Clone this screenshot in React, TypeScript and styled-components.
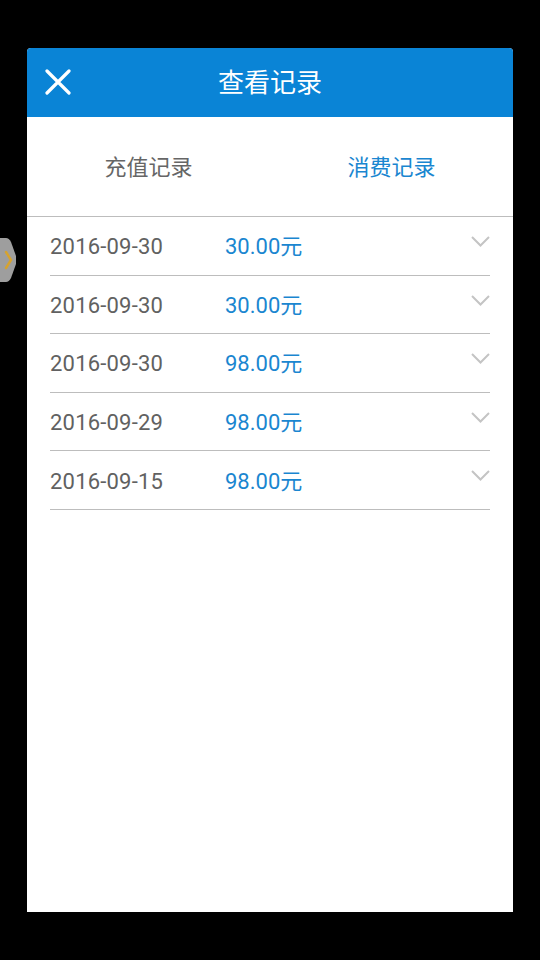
import styled, { createGlobalStyle } from "styled-components";

const GlobalStyle = createGlobalStyle`
    html, body {
        margin: 0;
        padding: 0;
        background: #000;
    }
    body {
        font-family: Roboto, "Noto Sans CJK SC", sans-serif;
    }
`

const records = [
    { date: "2016-09-30", amount: "30.00元" },
    { date: "2016-09-30", amount: "30.00元" },
    { date: "2016-09-30", amount: "98.00元" },
    { date: "2016-09-29", amount: "98.00元" },
    { date: "2016-09-15", amount: "98.00元" },
];

export default function App() {
    return (
        <>
            <GlobalStyle />
            <Screen>
                <SideHandle>
                    <svg width="16" height="44" viewBox="0 0 16 44">
                        <path d="M0 0 H6 Q9 0 11 4 L16 18 Q17 22 16 26 L11 40 Q9 44 6 44 H0 Z" fill="#9e9e9e" />
                        <path d="M6 14 L11 22 L6 30" stroke="#d7a32c" strokeWidth="2.4" fill="none" strokeLinecap="round" />
                    </svg>
                </SideHandle>
                <Dialog>
                    <Header>
                        <CloseBtn>
                            <svg width="26" height="26" viewBox="0 0 26 26">
                                <path d="M2 2 L24 24 M24 2 L2 24" stroke="#fff" strokeWidth="3.2" strokeLinecap="round" />
                            </svg>
                        </CloseBtn>
                        <Title>查看记录</Title>
                        <span />
                    </Header>
                    <Tabs>
                        <Tab>充值记录</Tab>
                        <Tab $active>消费记录</Tab>
                    </Tabs>
                    <List>
                        {records.map((r, i) => (
                            <Row key={i}>
                                <Info>
                                    <DateText>{r.date}</DateText>
                                    <Amount>{r.amount}</Amount>
                                </Info>
                                <Chevron>
                                    <svg width="19" height="11" viewBox="0 0 19 11">
                                        <path d="M1 1 L9.5 9.5 L18 1" stroke="#c4c4c4" strokeWidth="2" fill="none" />
                                    </svg>
                                </Chevron>
                            </Row>
                        ))}
                    </List>
                </Dialog>
            </Screen>
        </>
    );
}

const Screen = styled.div`
    position: relative;
    width: 540px;
    height: 960px;
    padding-top: 48px;
    box-sizing: border-box;
`

const SideHandle = styled.div`
    position: absolute;
    left: 0;
    top: 238px;
    line-height: 0;
`

const Dialog = styled.div`
    margin-left: 27px;
    width: 486px;
    height: 864px;
    background: #fff;
    border-radius: 4px 4px 0 0;
    overflow: hidden;
`

const Header = styled.div`
    height: 69px;
    background: #0a84d6;
    display: grid;
    grid-template-columns: 62px 1fr 62px;
    align-items: center;
`

const CloseBtn = styled.div`
    display: flex;
    justify-content: center;
    align-items: center;
    margin-top: -2px;
`

const Title = styled.h1`
    margin: -4px 0 0;
    text-align: center;
    color: #fff;
    font-size: 26px;
    font-weight: 400;
`

const Tabs = styled.div`
    height: 99px;
    display: grid;
    grid-template-columns: 1fr 1fr;
    align-items: center;
    border-bottom: 1px solid #bdbdbd;
`

const Tab = styled.div<{ $active?: boolean }>`
    text-align: center;
    font-size: 22px;
    color: ${p => (p.$active ? "#1a86d0" : "#666")};
    margin-top: -4px;
`

const List = styled.div`
    padding: 0 23px;
`

const Row = styled.div`
    height: 58.6px;
    box-sizing: border-box;
    border-bottom: 1px solid #bdbdbd;
    display: flex;
    align-items: center;
`

const Info = styled.div`
    flex: 1;
    display: flex;
    align-items: baseline;
    margin-top: -3px;
`

const DateText = styled.span`
    width: 175px;
    font-size: 22px;
    color: #616161;
    letter-spacing: 0.2px;
`

const Amount = styled.span`
    font-size: 22px;
    color: #1a86d0;
`

const Chevron = styled.span`
    align-self: flex-start;
    margin-top: 19px;
    line-height: 0;
`
